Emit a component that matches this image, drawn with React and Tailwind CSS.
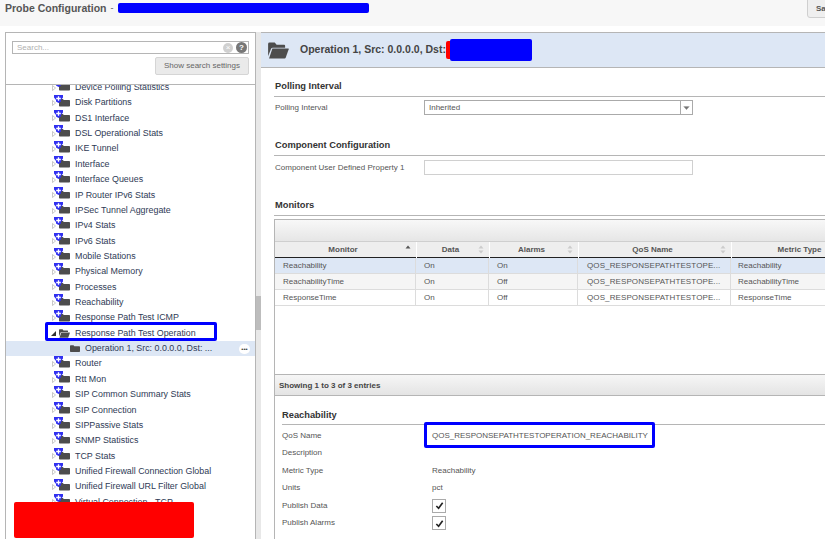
const nodes = [
	'Device Polling Statistics',
	'Disk Partitions',
	'DS1 Interface',
	'DSL Operational Stats',
	'IKE Tunnel',
	'Interface',
	'Interface Queues',
	'IP Router IPv6 Stats',
	'IPSec Tunnel Aggregate',
	'IPv4 Stats',
	'IPv6 Stats',
	'Mobile Stations',
	'Physical Memory',
	'Processes',
	'Reachability',
	'Response Path Test ICMP'
];

const nodesAfter = [
	'Router',
	'Rtt Mon',
	'SIP Common Summary Stats',
	'SIP Connection',
	'SIPPassive Stats',
	'SNMP Statistics',
	'TCP Stats',
	'Unified Firewall Connection Global',
	'Unified Firewall URL Filter Global',
	'Virtual Connection - TCP'
];

const monitors = [
	{ name: 'Reachability', data: 'On', alarms: 'On', selected: true },
	{ name: 'ReachabilityTime', data: 'On', alarms: 'Off', shaded: true },
	{ name: 'ResponseTime', data: 'On', alarms: 'Off' }
];

const columns = 'grid grid-cols-[141px_72px_88px_152px_135px] gap-x-[1px] w-[592px]';

const FolderClosed = ({ className }) => (
	<svg viewBox="0 0 14 10" className={className}>
		<path d="M0 1.5 Q0 0.5 1 0.5 H5 L6 1.8 H13 Q14 1.8 14 2.8 V9 Q14 10 13 10 H1 Q0 10 0 9 Z" fill="#4d4d4d" />
	</svg>
);

const FolderOpen = ({ className }) => (
	<svg viewBox="0 0 22 18" className={className}>
		<path d="M0 2 Q0 0.5 1.5 0.5 H7 L9 3 H17 Q18 3 18 4 V6 H5 Q3.5 6 3 7.5 L0 15 Z" fill="#4d4d4d" />
		<path d="M4.5 7 H21.5 Q22 7 21.8 7.8 L18.5 17 Q18.3 17.5 17.5 17.5 H1 Z" fill="#4d4d4d" />
	</svg>
);

const FilterBadge = () => (
	<svg viewBox="0 0 9 8" className="absolute left-0 top-0 h-[8px] w-[9px]">
		<path d="M0 0 H9 V2.5 L7 5 V6.5 L4.5 8 L2 6.5 V5 L0 2.5 Z" fill="#3030f0" />
		<path d="M4.5 1.2 V5.8 M2.2 3.5 H6.8" stroke="#fff" strokeWidth="1.3" />
	</svg>
);

const Expander = () => (
	<svg viewBox="0 0 4 6" className="h-[6px] w-[4px] shrink-0">
		<path d="M0.5 0.5 L3.5 3 L0.5 5.5 Z" fill="#fff" stroke="#b0b0b0" strokeWidth="0.7" />
	</svg>
);

const TreeRow = ({ label }) => (
	<div className="flex h-[15.36px] items-center pl-[46px]">
		<Expander />
		<span className="relative -mt-[5px] ml-[-2px] block h-[12px] w-[17px] shrink-0">
			<FolderClosed className="absolute bottom-0 left-[5px] h-[9px] w-[11px]" />
			<FilterBadge />
		</span>
		<span className="ml-[4px] whitespace-nowrap text-[8.9px] text-[#2e3a55]">{label}</span>
	</div>
);

const SortIcon = ({ active }) => (
	<svg viewBox="0 0 6 9" className="h-[9px] w-[6px] shrink-0">
		<path d="M3 0.5 L5.5 3.5 H0.5 Z" fill={active ? '#555' : '#ccc'} />
		{! active && <path d="M3 8.5 L5.5 5.5 H0.5 Z" fill="#ccc" />}
	</svg>
);

const HeadCell = ({ label, sorted, noSort }) => (
	<div className={`relative flex h-[16px] items-center justify-center border-b-[1px] border-b-[#222] bg-[#eeeeee] text-[8px] font-bold text-[#555] ${noSort ? '' : 'pr-[5px]'}`}>
		{label}
		{! noSort && (
			<span className="absolute right-[5px] top-[3px]">
				<SortIcon active={sorted} />
			</span>
		)}
	</div>
);

const SectionHeading = ({ children, className = '' }) => (
	<div className={`border-b border-[#b5b5b5] text-[9.3px] font-bold leading-[12px] text-[#333] ${className}`}>
		{children}
	</div>
);

const DetailRow = ({ label, children, flush, className = '' }) => (
	<div className={`flex items-center text-[8px] text-[#555] ${className}`}>
		<span className={`w-[150px] shrink-0 ${flush ? '' : 'pl-[1px]'}`}>{label}</span>
		{children}
	</div>
);

const CheckBox = () => (
	<span className="flex h-[14px] w-[14px] items-center justify-center border border-[#aaa] bg-white">
		<svg viewBox="0 0 10 10" className="h-[9px] w-[9px]">
			<path d="M1.5 5.5 L4 8 L8.5 2" fill="none" stroke="#222" strokeWidth="1.8" />
		</svg>
	</span>
);

const App = () => (
	<div className="relative h-[539px] w-[825px] overflow-hidden bg-white font-['Liberation_Sans',Arial,sans-serif]">
		<header className="flex h-[26px] items-start bg-[#f7f7f7]">
			<h1 className="mt-[1px] ml-[5px] text-[10.5px] font-bold leading-[14px] text-[#555]">Probe Configuration</h1>
			<span className="mt-[1px] ml-[4px] text-[9px] leading-[14px] text-[#555]">-</span>
			<span className="mt-[3px] ml-[4px] h-[10px] w-[251px] rounded-[2px] bg-[#0000ff]" />
			<button className="ml-auto mr-[-22px] h-[19px] w-[40px] -translate-y-[1px] rounded-bl-[3px] border border-[#cfcfcf] bg-[#efefef] pl-[8px] text-left text-[8px] font-bold text-[#555]">
				Save
			</button>
		</header>

		<div className="mt-[6px] flex h-[507px]">
			<aside className="ml-[5px] flex w-[251px] shrink-0 flex-col border-x border-t border-[#b5b5b5]">
				<div className="h-[52px] shrink-0 border-b border-[#b5b5b5] px-[6px] pt-[8px]">
					<div className="flex h-[13px] items-center border border-[#b5b5b5] bg-white pl-[4px] pr-[1px]">
						<span className="text-[8px] text-[#b0b0b0]">Search...</span>
						<span className="ml-auto flex h-[10px] w-[10px] items-center justify-center rounded-full bg-[#d0d0d0] text-[8px] leading-none text-white">×</span>
						<span className="ml-[3px] flex h-[11px] w-[11px] items-center justify-center rounded-full bg-[#777] text-[8px] font-bold leading-none text-white">?</span>
					</div>
					<div className="mt-[3px] flex justify-end">
						<button className="h-[18px] w-[94px] rounded-[2px] border border-[#d5d5d5] bg-[#eaeaea] text-[8px] text-[#666]">
							Show search settings
						</button>
					</div>
				</div>
				<div className="min-h-0 flex-1 overflow-hidden">
					<div className="-mt-[5px]">
						{nodes.map( ( label ) => (
							<TreeRow key={label} label={label} />
						) )}
						<div className="flex h-[15.36px] items-center pl-[45px]">
							<svg viewBox="0 0 5 5" className="h-[5px] w-[5px] shrink-0">
								<path d="M0 5 L5 0 V5 Z" fill="#333" />
							</svg>
							<FolderOpen className="ml-[3px] h-[9px] w-[11px] shrink-0" />
							<span className="ml-[5px] whitespace-nowrap text-[8.9px] text-[#2e3a55]">Response Path Test Operation</span>
						</div>
						<div className="flex h-[15.36px] items-center bg-[#dde7f5] pl-[64px]">
							<FolderClosed className="h-[9px] w-[10px] shrink-0" />
							<span className="ml-[5px] whitespace-nowrap text-[8.9px] text-[#2e3a55]">Operation 1, Src: 0.0.0.0, Dst: ...</span>
							<span className="ml-auto mr-[5px] flex h-[10px] w-[11px] items-center justify-center rounded-full bg-white text-[6px] font-bold leading-none text-[#444]">•••</span>
						</div>
						{nodesAfter.map( ( label ) => (
							<TreeRow key={label} label={label} />
						) )}
					</div>
				</div>
			</aside>

			<div className="flex w-[5px] shrink-0 items-start bg-[#e8e8e8]">
				<div className="mt-[264px] h-[34px] w-[5px] bg-[#bdbdbd]" />
			</div>

			<main className="min-w-0 flex-1">
				<div className="flex h-[36px] items-center border-y border-[#b5b5b5] bg-[#dde7f5] pl-[7px]">
					<FolderOpen className="h-[17px] w-[21px] shrink-0" />
					<span className="ml-[11px] whitespace-nowrap text-[10.5px] font-bold text-[#444]">Operation 1, Src: 0.0.0.0, Dst:</span>
					<span className="h-[18px] w-[4px] rounded-l-[2px] bg-[#ff0000]" />
					<span className="h-[22px] w-[82px] rounded-[2px] bg-[#0000ff]" />
				</div>

				<div className="pl-[13px]">
					<SectionHeading className="mt-[12px] pb-[4px] pl-[1px]">Polling Interval</SectionHeading>
					<DetailRow className="mt-[3px] h-[15px]" label="Polling Interval">
						<div className="flex h-[15px] w-[269px] border border-[#aaa]">
							<span className="flex-1 pl-[4px] text-[8px] leading-[13px]">Inherited</span>
							<span className="flex w-[12px] items-center justify-center border-l border-[#aaa]">
								<svg viewBox="0 0 8 5" className="h-[4px] w-[7px]">
									<path d="M0 0 H8 M1 1 H7 L4 4.5 Z" fill="#777" stroke="#777" strokeWidth="0.6" />
								</svg>
							</span>
						</div>
					</DetailRow>

					<SectionHeading className="mt-[24px] pb-[4px] pl-[1px]">Component Configuration</SectionHeading>
					<DetailRow className="mt-[4px] h-[15px]" label="Component User Defined Property 1">
						<div className="h-[15px] w-[269px] border border-[#d0d0d0]" />
					</DetailRow>

					<SectionHeading className="mt-[24px] pb-[4px] pl-[1px]">Monitors</SectionHeading>

					<div className="mt-[3px] h-[177px] overflow-hidden border-l border-t border-[#b5b5b5]">
						<div className="h-[21px] bg-gradient-to-b from-[#f8f8f8] to-[#e6e6e6]" />
						<div className="h-[133px] border-t border-[#cfcfcf]">
							<div className={columns}>
								<HeadCell label="Monitor" sorted />
								<HeadCell label="Data" />
								<HeadCell label="Alarms" />
								<HeadCell label="QoS Name" />
								<HeadCell label="Metric Type" noSort />
							</div>
							{monitors.map( ( row ) => (
								<div
									key={row.name}
									className={`${columns} h-[16px] border-b border-[#dcdcdc] text-[8px] leading-[15px] text-[#555] ${row.selected ? 'bg-[#dde7f5]' : row.shaded ? 'bg-[#f5f5f5]' : 'bg-white'}`}
								>
									<span className="border-r border-[#dcdcdc] pl-[8px]">{row.name}</span>
									<span className="border-r border-[#dcdcdc] pl-[7px]">{row.data}</span>
									<span className="border-r border-[#dcdcdc] pl-[7px]">{row.alarms}</span>
									<span className="border-r border-[#dcdcdc] pl-[8px] tracking-[0.1px]">QOS_RESPONSEPATHTESTOPE...</span>
									<span className="pl-[6px]">{row.name}</span>
								</div>
							) )}
						</div>
						<div className="flex h-[22px] items-center border-y border-[#b5b5b5] bg-gradient-to-b from-[#f6f6f6] to-[#e4e4e4] pl-[4px] pt-[1px] text-[8px] font-bold text-[#444]">
							Showing 1 to 3 of 3 entries
						</div>
					</div>

					<div className="h-[144px] border-l border-[#b5b5b5] pl-[7px] pt-[13px]">
						<SectionHeading className="pb-[3px]">Reachability</SectionHeading>
						<DetailRow flush className="mt-[2px] h-[17px]" label="QoS Name">
							<span className="leading-none">QOS_RESPONSEPATHTESTOPERATION_REACHABILITY</span>
						</DetailRow>
						<DetailRow flush className="h-[18px]" label="Description" />
						<DetailRow flush className="h-[17px]" label="Metric Type">
							<span>Reachability</span>
						</DetailRow>
						<DetailRow flush className="h-[17px]" label="Units">
							<span>pct</span>
						</DetailRow>
						<DetailRow flush className="h-[19px]" label="Publish Data">
							<CheckBox />
						</DetailRow>
						<DetailRow flush className="h-[16px]" label="Publish Alarms">
							<CheckBox />
						</DetailRow>
					</div>
				</div>
			</main>
		</div>

		{/* redaction marks and highlights drawn on top of the screenshot */}
		<span className="absolute left-[14px] top-[502px] h-[36px] w-[180px] rounded-[2px] bg-[#ff0000]" />
		<span className="absolute left-[45px] top-[322px] h-[19px] w-[172px] rounded-[2px] border-[3px] border-[#0000ff]" />
		<span className="absolute left-[424px] top-[422px] h-[26px] w-[231px] rounded-[2px] border-[3px] border-[#0000ff]" />
	</div>
);

export default App;
